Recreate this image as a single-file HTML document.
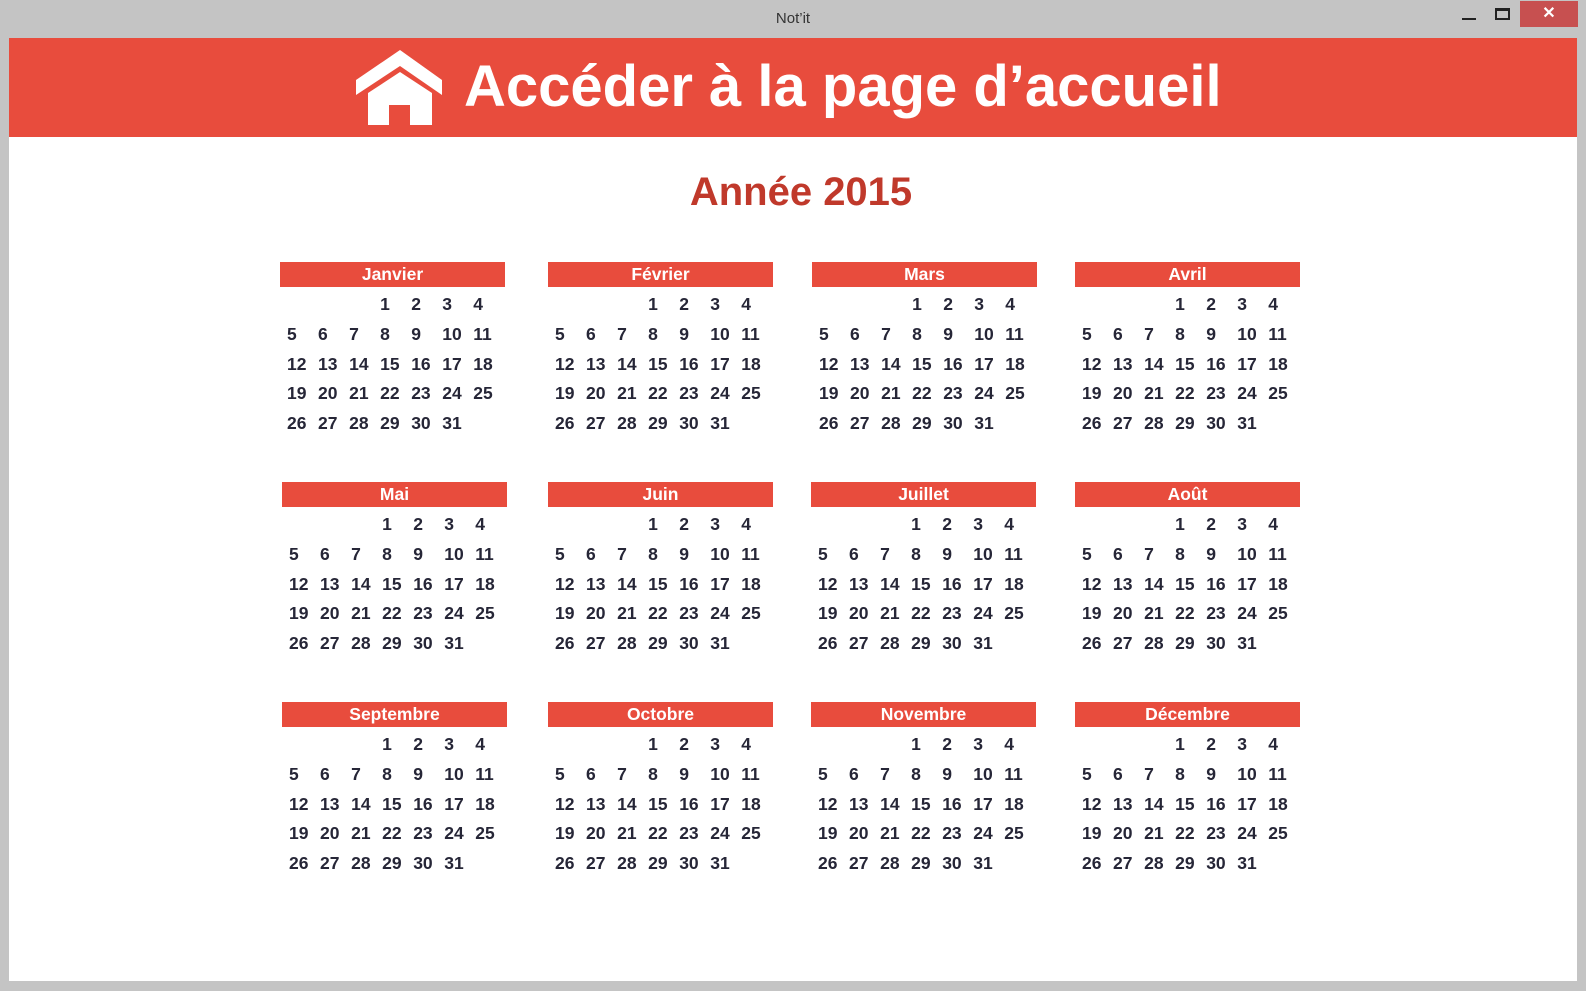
<!DOCTYPE html>
<html><head><meta charset="utf-8"><style>
*{margin:0;padding:0;box-sizing:border-box}
body{width:1586px;height:991px;background:#c4c4c4;position:relative;overflow:hidden;font-family:"Liberation Sans",sans-serif}
.title{position:absolute;top:0;left:0;width:1586px;height:37px;text-align:center;font-size:15px;line-height:38px;color:#333}
.close{position:absolute;left:1520px;top:1px;width:58px;height:26px;background:#c75050;color:#fff;text-align:center;font-size:16px;line-height:26px;font-weight:bold}
.min{position:absolute;left:1462px;top:18px;width:14px;height:2px;background:#222}
.max{position:absolute;left:1495px;top:8px;width:15px;height:12px;border:2px solid #222;border-top-width:3px}
.content{position:absolute;left:9px;top:38px;width:1568px;height:943px;background:#fff}
.banner{position:absolute;left:0;top:0;width:1568px;height:99px;background:#e84c3d}
.banner .t{position:absolute;left:455px;top:13px;font-size:58px;font-weight:bold;color:#fff;line-height:72px;white-space:nowrap}
.year{position:absolute;left:0;top:170px;width:1602px;text-align:center;font-size:40px;line-height:44px;font-weight:bold;color:#c0392b}
.m{position:absolute;width:225px}
.m .h{height:25px;background:#e84c3d;color:#fff;font-weight:bold;font-size:17.5px;text-align:center;line-height:25px}
.m .g{display:grid;grid-template-columns:repeat(7,31.05px);padding-left:7px;padding-top:3px}
.m .g span{height:29.8px;line-height:29.8px;font-size:17.5px;font-weight:bold;color:#262637}
</style></head><body>
<div class="title">Not’it</div>
<div class="min"></div><div class="max"></div><div class="close">✕</div>
<div class="content">
<div class="banner">
<div class="t">Accéder à la page d’accueil</div>
</div>
</div>
<svg style="position:absolute;left:0;top:0" width="1586" height="140" viewBox="0 0 1586 140">
<polygon points="356,80 400,50 442,80 442,95 400,66 356,95" fill="#fff"/>
<polygon points="368,93 400,72 432,93 432,125 410,125 410,105 389,105 389,125 368,125" fill="#fff"/>
</svg>
<div class="year">Année 2015</div>

<div class="m" style="left:280px;top:262px"><div class="h">Janvier</div><div class="g"><span></span><span></span><span></span><span>1</span><span>2</span><span>3</span><span>4</span><span>5</span><span>6</span><span>7</span><span>8</span><span>9</span><span>10</span><span>11</span><span>12</span><span>13</span><span>14</span><span>15</span><span>16</span><span>17</span><span>18</span><span>19</span><span>20</span><span>21</span><span>22</span><span>23</span><span>24</span><span>25</span><span>26</span><span>27</span><span>28</span><span>29</span><span>30</span><span>31</span></div></div>
<div class="m" style="left:548px;top:262px"><div class="h">Février</div><div class="g"><span></span><span></span><span></span><span>1</span><span>2</span><span>3</span><span>4</span><span>5</span><span>6</span><span>7</span><span>8</span><span>9</span><span>10</span><span>11</span><span>12</span><span>13</span><span>14</span><span>15</span><span>16</span><span>17</span><span>18</span><span>19</span><span>20</span><span>21</span><span>22</span><span>23</span><span>24</span><span>25</span><span>26</span><span>27</span><span>28</span><span>29</span><span>30</span><span>31</span></div></div>
<div class="m" style="left:812px;top:262px"><div class="h">Mars</div><div class="g"><span></span><span></span><span></span><span>1</span><span>2</span><span>3</span><span>4</span><span>5</span><span>6</span><span>7</span><span>8</span><span>9</span><span>10</span><span>11</span><span>12</span><span>13</span><span>14</span><span>15</span><span>16</span><span>17</span><span>18</span><span>19</span><span>20</span><span>21</span><span>22</span><span>23</span><span>24</span><span>25</span><span>26</span><span>27</span><span>28</span><span>29</span><span>30</span><span>31</span></div></div>
<div class="m" style="left:1075px;top:262px"><div class="h">Avril</div><div class="g"><span></span><span></span><span></span><span>1</span><span>2</span><span>3</span><span>4</span><span>5</span><span>6</span><span>7</span><span>8</span><span>9</span><span>10</span><span>11</span><span>12</span><span>13</span><span>14</span><span>15</span><span>16</span><span>17</span><span>18</span><span>19</span><span>20</span><span>21</span><span>22</span><span>23</span><span>24</span><span>25</span><span>26</span><span>27</span><span>28</span><span>29</span><span>30</span><span>31</span></div></div>

<div class="m" style="left:282px;top:482px"><div class="h">Mai</div><div class="g"><span></span><span></span><span></span><span>1</span><span>2</span><span>3</span><span>4</span><span>5</span><span>6</span><span>7</span><span>8</span><span>9</span><span>10</span><span>11</span><span>12</span><span>13</span><span>14</span><span>15</span><span>16</span><span>17</span><span>18</span><span>19</span><span>20</span><span>21</span><span>22</span><span>23</span><span>24</span><span>25</span><span>26</span><span>27</span><span>28</span><span>29</span><span>30</span><span>31</span></div></div>
<div class="m" style="left:548px;top:482px"><div class="h">Juin</div><div class="g"><span></span><span></span><span></span><span>1</span><span>2</span><span>3</span><span>4</span><span>5</span><span>6</span><span>7</span><span>8</span><span>9</span><span>10</span><span>11</span><span>12</span><span>13</span><span>14</span><span>15</span><span>16</span><span>17</span><span>18</span><span>19</span><span>20</span><span>21</span><span>22</span><span>23</span><span>24</span><span>25</span><span>26</span><span>27</span><span>28</span><span>29</span><span>30</span><span>31</span></div></div>
<div class="m" style="left:811px;top:482px"><div class="h">Juillet</div><div class="g"><span></span><span></span><span></span><span>1</span><span>2</span><span>3</span><span>4</span><span>5</span><span>6</span><span>7</span><span>8</span><span>9</span><span>10</span><span>11</span><span>12</span><span>13</span><span>14</span><span>15</span><span>16</span><span>17</span><span>18</span><span>19</span><span>20</span><span>21</span><span>22</span><span>23</span><span>24</span><span>25</span><span>26</span><span>27</span><span>28</span><span>29</span><span>30</span><span>31</span></div></div>
<div class="m" style="left:1075px;top:482px"><div class="h">Août</div><div class="g"><span></span><span></span><span></span><span>1</span><span>2</span><span>3</span><span>4</span><span>5</span><span>6</span><span>7</span><span>8</span><span>9</span><span>10</span><span>11</span><span>12</span><span>13</span><span>14</span><span>15</span><span>16</span><span>17</span><span>18</span><span>19</span><span>20</span><span>21</span><span>22</span><span>23</span><span>24</span><span>25</span><span>26</span><span>27</span><span>28</span><span>29</span><span>30</span><span>31</span></div></div>

<div class="m" style="left:282px;top:702px"><div class="h">Septembre</div><div class="g"><span></span><span></span><span></span><span>1</span><span>2</span><span>3</span><span>4</span><span>5</span><span>6</span><span>7</span><span>8</span><span>9</span><span>10</span><span>11</span><span>12</span><span>13</span><span>14</span><span>15</span><span>16</span><span>17</span><span>18</span><span>19</span><span>20</span><span>21</span><span>22</span><span>23</span><span>24</span><span>25</span><span>26</span><span>27</span><span>28</span><span>29</span><span>30</span><span>31</span></div></div>
<div class="m" style="left:548px;top:702px"><div class="h">Octobre</div><div class="g"><span></span><span></span><span></span><span>1</span><span>2</span><span>3</span><span>4</span><span>5</span><span>6</span><span>7</span><span>8</span><span>9</span><span>10</span><span>11</span><span>12</span><span>13</span><span>14</span><span>15</span><span>16</span><span>17</span><span>18</span><span>19</span><span>20</span><span>21</span><span>22</span><span>23</span><span>24</span><span>25</span><span>26</span><span>27</span><span>28</span><span>29</span><span>30</span><span>31</span></div></div>
<div class="m" style="left:811px;top:702px"><div class="h">Novembre</div><div class="g"><span></span><span></span><span></span><span>1</span><span>2</span><span>3</span><span>4</span><span>5</span><span>6</span><span>7</span><span>8</span><span>9</span><span>10</span><span>11</span><span>12</span><span>13</span><span>14</span><span>15</span><span>16</span><span>17</span><span>18</span><span>19</span><span>20</span><span>21</span><span>22</span><span>23</span><span>24</span><span>25</span><span>26</span><span>27</span><span>28</span><span>29</span><span>30</span><span>31</span></div></div>
<div class="m" style="left:1075px;top:702px"><div class="h">Décembre</div><div class="g"><span></span><span></span><span></span><span>1</span><span>2</span><span>3</span><span>4</span><span>5</span><span>6</span><span>7</span><span>8</span><span>9</span><span>10</span><span>11</span><span>12</span><span>13</span><span>14</span><span>15</span><span>16</span><span>17</span><span>18</span><span>19</span><span>20</span><span>21</span><span>22</span><span>23</span><span>24</span><span>25</span><span>26</span><span>27</span><span>28</span><span>29</span><span>30</span><span>31</span></div></div>
</body></html>
